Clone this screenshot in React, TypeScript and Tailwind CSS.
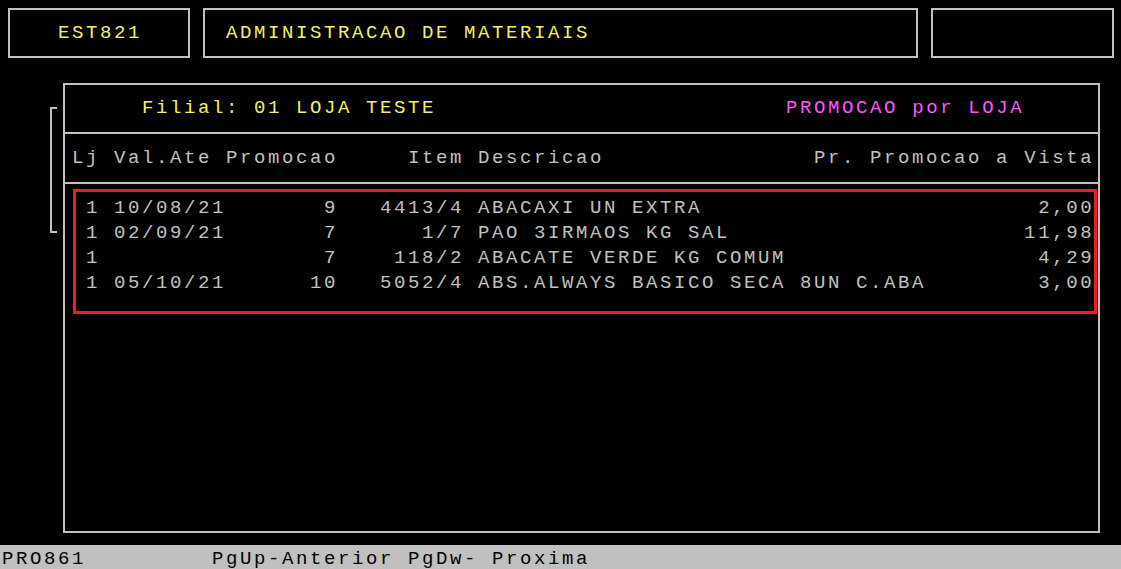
type Row = {
  date: string;
  promo: string;
  item: string;
  desc: string;
  price: string;
};

const rows: Row[] = [
  { date: "10/08/21", promo: "9", item: "4413/4", desc: "ABACAXI UN EXTRA", price: "2,00" },
  { date: "02/09/21", promo: "7", item: "1/7", desc: "PAO 3IRMAOS KG SAL", price: "11,98" },
  { date: "", promo: "7", item: "118/2", desc: "ABACATE VERDE KG COMUM", price: "4,29" },
  { date: "05/10/21", promo: "10", item: "5052/4", desc: "ABS.ALWAYS BASICO SECA 8UN C.ABA", price: "3,00" },
];

function rowLine(r: Row) {
  const left = `1 ${r.date.padEnd(8)}${r.promo.padStart(8)}${r.item.padStart(9)} ${r.desc}`;
  return left.padEnd(72 - r.price.length) + r.price;
}

const header = "Lj Val.Ate Promocao     Item Descricao".padEnd(53) + "Pr. Promocao a Vista";

export default function App() {
  return (
    <div className="w-[1121px] h-[569px] bg-black flex flex-col overflow-hidden whitespace-pre font-['Liberation_Mono','Courier_New',monospace] text-[19px] tracking-[2.6px] leading-[25px] text-[#c0c0c0]">
      {/* top boxes */}
      <div className="flex gap-[13px] pl-[8px] pt-[8px]">
        <div className="w-[182px] h-[50px] border-2 border-[#c0c0c0] flex items-center pl-[48px] text-[#f2f25a]">
          EST821
        </div>
        <div className="w-[715px] h-[50px] border-2 border-[#c0c0c0] flex items-center pl-[21px] text-[#f2f25a]">
          ADMINISTRACAO DE MATERIAIS
        </div>
        <div className="w-[183px] h-[50px] border-2 border-[#c0c0c0]" />
      </div>

      {/* main panel */}
      <div className="flex mt-[25px] h-[450px]">
        <div className="ml-[50px] mt-[24px] w-[7px] h-[126px] border-l-2 border-t-2 border-b-2 border-[#c0c0c0]" />
        <div className="ml-[6px] w-[1037px] h-[450px] border-2 border-[#c0c0c0] flex flex-col">
          <div className="h-[49px] pt-[11px] pl-[7px] border-b-2 border-[#c0c0c0]">
            <span className="text-[#f2f25a]">{"     Filial: 01 LOJA TESTE".padEnd(51)}</span>
            <span className="text-[#ff55ff]">PROMOCAO por LOJA</span>
          </div>
          <div className="h-[50px] pt-[12px] pl-[7px] border-b-2 border-[#c0c0c0]">
            {header}
          </div>
          <div className="flex-1 pl-[8px] pr-[1px] pt-[5px]">
            <div className="h-[125px] border-[3px] border-[#ec1c24] pl-[10px] pt-[4px]">
              {rows.map((r) => (
                <div key={r.item}>{rowLine(r)}</div>
              ))}
            </div>
          </div>
        </div>
      </div>

      {/* status bar */}
      <div className="mt-[12px] h-[24px] overflow-hidden bg-[#c0c0c0] text-black leading-[28px] pl-[2px]">
        {"PRO861         PgUp-Anterior PgDw- Proxima"}
      </div>
    </div>
  );
}
